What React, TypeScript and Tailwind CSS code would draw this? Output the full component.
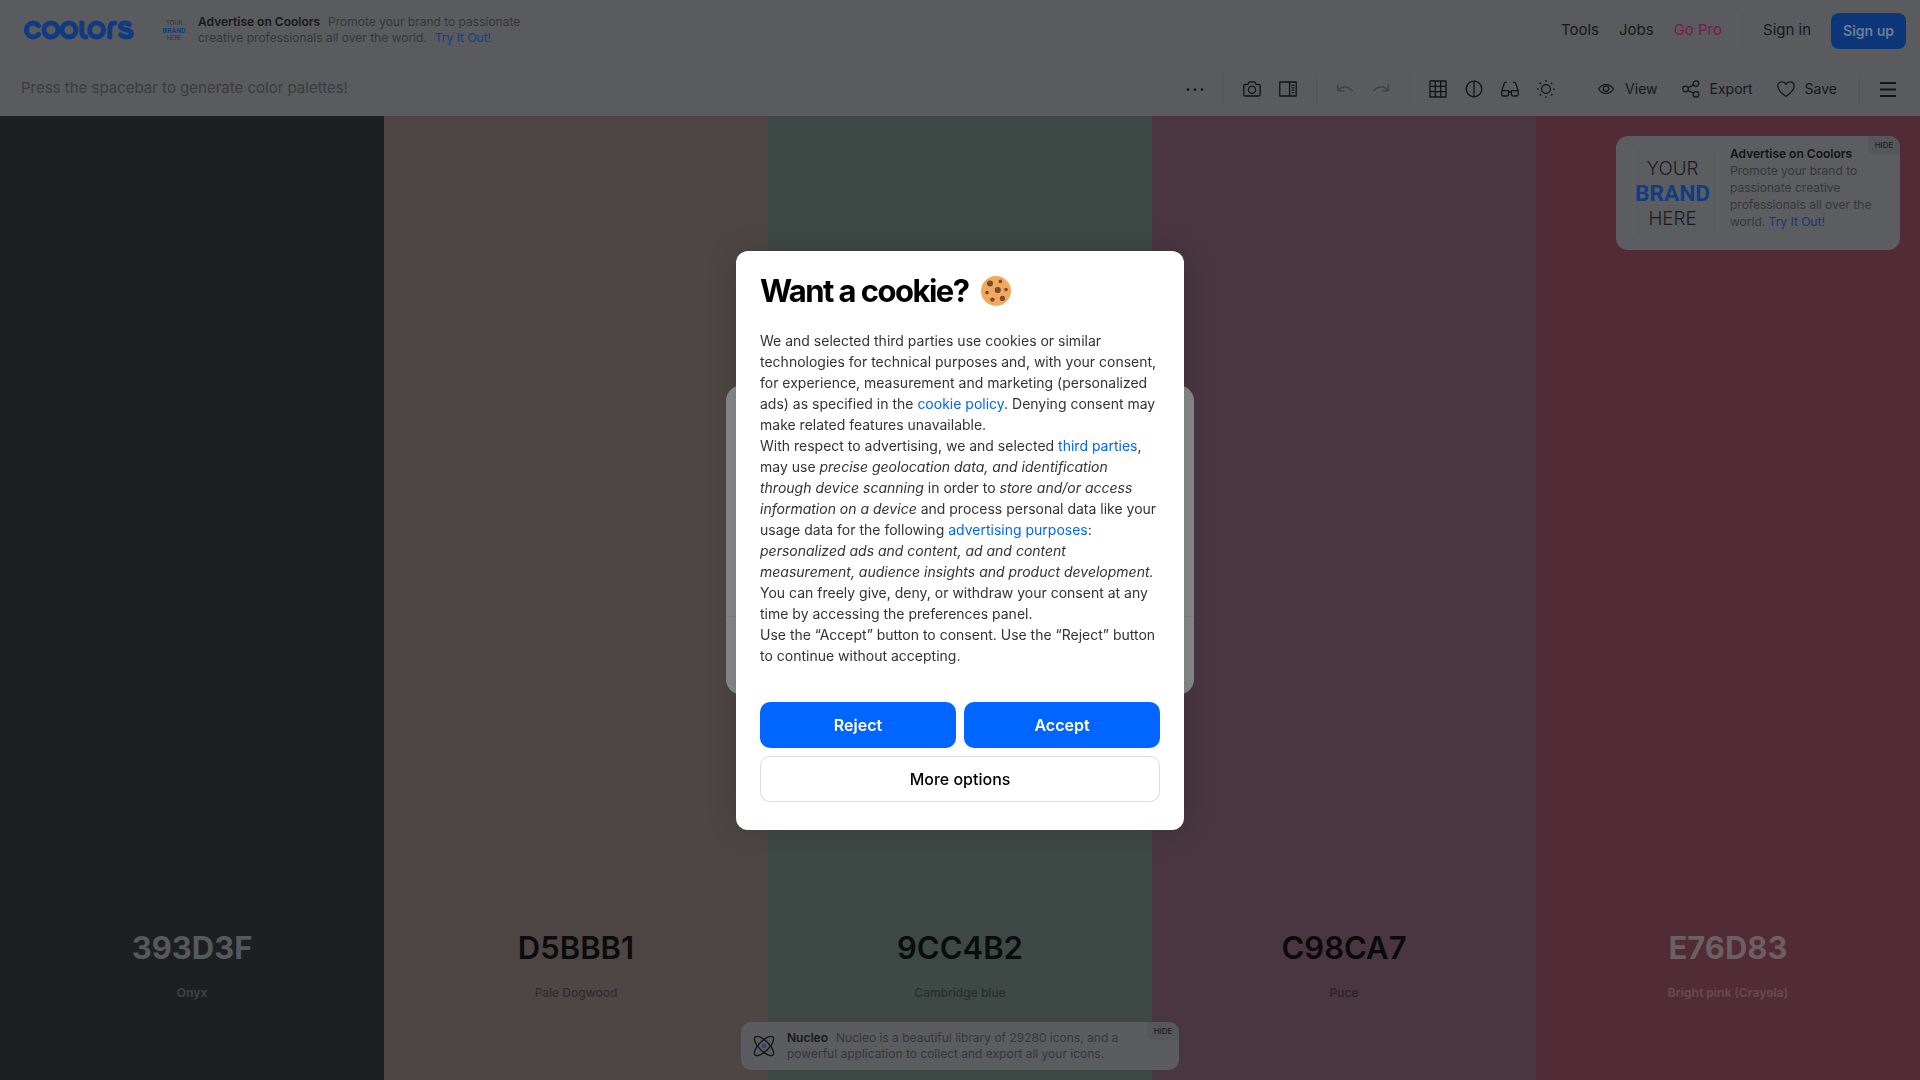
import type { ReactNode } from "react";

const palette = [
  { hex: "393D3F", name: "Onyx", column: "bg-[#1d2023]", code: "text-[#55595c] font-bold", label: "text-[#3c4043] font-bold" },
  { hex: "D5BBB1", name: "Pale Dogwood", column: "bg-[#4d4645]", code: "text-[#0c0c0c] font-semibold", label: "text-[#302c2c] font-medium" },
  { hex: "9CC4B2", name: "Cambridge blue", column: "bg-[#3e4845]", code: "text-[#090d0c] font-semibold", label: "text-[#272f2c] font-medium" },
  { hex: "C98CA7", name: "Puce", column: "bg-[#493641]", code: "text-[#0c090b] font-semibold", label: "text-[#2c2027] font-medium" },
  { hex: "E76D83", name: "Bright pink (Crayola)", column: "bg-[#512c36]", code: "text-[#6b5f62] font-bold", label: "text-[#66484f] font-bold" },
];

function Icon({ children, size = 18 }: { children: ReactNode; size?: number }) {
  return (
    <svg width={size} height={size} viewBox="0 0 18 18" fill="none" stroke="currentColor" strokeWidth="1.3" strokeLinecap="round" strokeLinejoin="round" aria-hidden="true">
      {children}
    </svg>
  );
}

function ToolButton({ label, muted, children }: { label: string; muted?: boolean; children: ReactNode }) {
  return (
    <button type="button" aria-label={label} className={`flex h-9 w-9 items-center justify-center ${muted ? "text-[#3f4043]" : "text-[#121316]"}`}>
      {children}
    </button>
  );
}

function TextButton({ label, children }: { label: string; children: ReactNode }) {
  return (
    <button type="button" className="flex h-9 items-center gap-2.5 px-3 text-sm leading-5 text-[#17181b]">
      {children}
      {label}
    </button>
  );
}

function Divider({ hidden }: { hidden?: boolean }) {
  return <span className={`mx-2.5 h-8 w-px ${hidden ? "" : "bg-[#545559]"}`} />;
}

function Logo() {
  return (
    <svg width="112" height="20" viewBox="0 0 112 20" fill="none" stroke="#103b80" strokeWidth="5" strokeLinecap="round" strokeLinejoin="round" role="img" aria-label="Coolors">
      <path d="M14.6 5.6A6.9 6.9 0 1 0 14.6 14.4" />
      <circle cx="27" cy="10" r="7" />
      <circle cx="45" cy="10" r="7" />
      <path d="M57.8 2.9V11.6C57.8 15 59.4 16.8 61.8 17" />
      <circle cx="72.6" cy="10" r="7" />
      <path d="M85.8 17V9.6C85.8 5.2 87.6 3.2 90.6 3.1" />
      <path d="M105.4 4.4C103 2.4 96.4 2.4 96.4 6.2C96.4 10.6 107.4 8.8 107.4 13.4C107.4 18 99.4 17.6 96.6 14.8" />
    </svg>
  );
}

function BrandArt({ width, height }: { width: number; height: number }) {
  return (
    <svg width={width} height={height} viewBox="0 0 84 92" role="img" aria-label="Your brand here" textAnchor="middle">
      <text x="39" y="29" fontSize="19" fill="#1b1c1f" fontFamily="Inter, sans-serif" fontWeight="300">YOUR</text>
      <text x="39" y="55" fontSize="23" fill="#103d84" fontFamily="Roboto, sans-serif" fontWeight="700">BRAND</text>
      <text x="39" y="79" fontSize="19" fill="#1b1c1f" fontFamily="Inter, sans-serif" fontWeight="300">HERE</text>
    </svg>
  );
}

function HideButton() {
  return (
    <button type="button" className="absolute top-0 right-0 h-[18px] w-8 rounded-tr-[10px] rounded-bl-md bg-[#55575a] text-[8px] leading-none font-medium text-[#1d1e21]">
      HIDE
    </button>
  );
}

function Header() {
  return (
    <header className="flex h-[60px] items-center justify-between pr-3.5 pl-6">
      <div className="flex items-center">
        <a href="#home" className="block"><Logo /></a>
        <a href="#ad" className="ml-[26px] flex items-center gap-2.5">
          <BrandArt width={26} height={28} />
          <p className="w-[344px] text-xs leading-4 text-[#36373a]">
            <strong className="mr-2 font-semibold text-[#17181b]">Advertise on Coolors</strong>
            Promote your brand to passionate creative professionals all over the world.
            <span className="ml-2 text-[#123f88]">Try It Out!</span>
          </p>
        </a>
      </div>
      <nav className="flex items-center gap-5 text-[15px] leading-5 text-[#17181b]">
        <a href="#tools">Tools</a>
        <a href="#jobs">Jobs</a>
        <a href="#pro" className="text-[#731c49]">Go Pro</a>
        <span className="h-9 w-px bg-[#56575b]" />
        <a href="#signin">Sign in</a>
        <button type="button" className="mt-0.5 h-9 rounded-lg bg-[#0d3679] px-3 text-sm font-semibold text-[#6d7c97]">Sign up</button>
      </nav>
    </header>
  );
}

function Toolbar() {
  return (
    <div className="flex h-14 items-center justify-between pr-3.5 pl-[21px]">
      <p className="text-[15px] leading-6 text-[#3a3b3e]">Press the spacebar to generate color palettes!</p>
      <div className="mt-0.5 flex items-center">
        <ToolButton label="More tools">
          <Icon><g fill="currentColor" stroke="none"><circle cx="2" cy="9.5" r="1.3" /><circle cx="9" cy="9.5" r="1.3" /><circle cx="16" cy="9.5" r="1.3" /></g></Icon>
        </ToolButton>
        <Divider />
        <ToolButton label="Create palette from photo">
          <Icon><path d="M2.2 4.5H4.8L6.3 1.8H11.7L13.2 4.5H15.8Q17.2 4.5 17.2 5.9V14.6Q17.2 16 15.8 16H2.2Q.8 16 .8 14.6V5.9Q.8 4.5 2.2 4.5Z" /><circle cx="9" cy="9.8" r="3.6" /></Icon>
        </ToolButton>
        <ToolButton label="Create a collage">
          <Icon><path d="M.8 2H17.2V16H.8ZM10.6 2V16M13.2 5.4H14.8M13.2 7.8H14.8M13.2 10.2H14.8M13.2 12.6H14.8" /></Icon>
        </ToolButton>
        <Divider />
        <ToolButton label="Undo" muted>
          <Icon><path d="M1.8 4.6V10.8H7.8M2.2 10.4C5.6 6.2 11.2 5.2 16.4 10.6" /></Icon>
        </ToolButton>
        <ToolButton label="Redo" muted>
          <Icon><path d="M16.2 4.6V10.8H10.2M15.8 10.4C12.4 6.2 6.8 5.2 1.6 10.6" /></Icon>
        </ToolButton>
        <Divider />
        <ToolButton label="View shades">
          <Icon><path d="M1 1H17V17H1ZM1 6.3H17M1 11.7H17M6.3 1V17M11.7 1V17" /></Icon>
        </ToolButton>
        <ToolButton label="Check contrast">
          <Icon><circle cx="9" cy="9" r="7.8" /><path d="M9 1.2V16.8" /></Icon>
        </ToolButton>
        <ToolButton label="Color blindness">
          <Icon><path d="M.8 10.6H7.6V14.2Q7.6 16 5.8 16H2.6Q.8 16 .8 14.2ZM10.4 10.6H17.2V14.2Q17.2 16 15.4 16H12.2Q10.4 16 10.4 14.2ZM7.6 12H10.4M.8 10.6L3.2 3.6Q3.7 2.2 5.4 2.2M17.2 10.6L14.8 3.6Q14.3 2.2 12.6 2.2" /></Icon>
        </ToolButton>
        <ToolButton label="Adjust palette">
          <Icon><circle cx="9" cy="9" r="4.4" /><path strokeWidth="1.7" d="M9 .9V1M9 17V17.1M.9 9H1M17 9H17.1M3.3 3.3V3.4M14.7 3.3V3.4M3.3 14.7V14.8M14.7 14.7V14.8" /></Icon>
        </ToolButton>
        <Divider hidden />
        <TextButton label="View">
          <Icon><path d="M1.6 9C5 3.2 13 3.2 16.4 9C13 14.8 5 14.8 1.6 9Z" /><circle cx="9" cy="8.6" r="2.7" /></Icon>
        </TextButton>
        <TextButton label="Export">
          <Icon><circle cx="3.6" cy="9" r="2.8" /><circle cx="14" cy="3.6" r="2.8" /><circle cx="14" cy="14.4" r="2.8" /><path d="M6.1 7.7L11.5 4.9M6.1 10.3L11.5 13.1" /></Icon>
        </TextButton>
        <TextButton label="Save">
          <Icon><path d="M9 16.6C5.4 13.8 .8 10.2 .8 6.2C.8 1.4 7 .2 9 4.4C11 .2 17.2 1.4 17.2 6.2C17.2 10.2 12.6 13.8 9 16.6Z" /></Icon>
        </TextButton>
        <Divider />
        <ToolButton label="Menu">
          <Icon><path strokeWidth="2" strokeLinecap="butt" d="M1 3H17M1 9.5H17M1 16H17" /></Icon>
        </ToolButton>
      </div>
    </div>
  );
}

function SideAd() {
  return (
    <aside className="absolute top-5 right-5 flex w-[284px] gap-3 rounded-xl bg-[#5b5d60] pt-[9px] pr-4 pb-[11px] pl-[17px]">
      <div className="h-[94px] w-[85px] shrink-0 border border-[#5f6164]"><BrandArt width={83} height={92} /></div>
      <p className="text-xs leading-[17px] text-[#36373a]">
        <strong className="block font-semibold text-[#121316]">Advertise on Coolors</strong>
        Promote your brand to passionate creative professionals all over the world.{" "}
        <a href="#try" className="text-[#1a3678]">Try It Out!</a>
      </p>
      <HideButton />
    </aside>
  );
}

function BottomAd() {
  return (
    <aside className="absolute bottom-2.5 left-1/2 flex h-12 w-[438px] -translate-x-1/2 items-center gap-3 rounded-[10px] bg-[#5a5c60] pl-3">
      <svg width="22" height="22" viewBox="0 0 22 22" fill="none" stroke="#17181b" strokeWidth="1.4" className="shrink-0" aria-hidden="true">
        <ellipse cx="11" cy="11" rx="12.6" ry="5" transform="rotate(45 11 11)" />
        <ellipse cx="11" cy="11" rx="12.6" ry="5" transform="rotate(-45 11 11)" />
        <circle cx="11" cy="11" r="2.2" fill="#3a3a78" stroke="none" />
      </svg>
      <p className="w-[350px] text-xs leading-4 text-[#36373a]">
        <strong className="mr-2 font-semibold text-[#17181b]">Nucleo</strong>
        Nucleo is a beautiful library of 29280 icons, and a powerful application to collect and export all your icons.
      </p>
      <HideButton />
    </aside>
  );
}

function CookieDialog() {
  const link = "text-[#0066ff]";
  return (
    <section role="dialog" aria-modal="true" aria-labelledby="cookie-title" className="relative w-[448px] rounded-xl bg-white px-6 pt-5 pb-7 shadow-[0_0_30px_rgba(0,0,0,0.18)]">
      <h1 id="cookie-title" className="flex items-center gap-3 text-[31px] leading-10 font-bold tracking-tighter text-black">
        Want a cookie?
        <svg width="32" height="32" viewBox="0 0 32 32" aria-hidden="true">
          <circle cx="16" cy="16" r="15" fill="#f0aa5f" />
          <g fill="#7d4a2c">
            <circle cx="10" cy="8.6" r="3" /><circle cx="20.4" cy="6.4" r="1.8" /><circle cx="17.8" cy="15" r="3.1" /><circle cx="26" cy="14.6" r="1.8" /><circle cx="7" cy="17.6" r="1.8" /><circle cx="12.4" cy="24.6" r="2.2" /><circle cx="22.4" cy="23.4" r="2.6" />
          </g>
        </svg>
      </h1>
      <div className="mt-[19px] text-sm leading-[21px] text-[#333333]">
        <p>
          We and selected third parties use cookies or similar technologies for technical purposes and, with your consent, for experience, measurement and marketing (personalized ads) as specified in the <a href="#policy" className={link}>cookie policy</a>. Denying consent may make related features unavailable.
        </p>
        <p>
          With respect to advertising, we and selected <a href="#parties" className={link}>third parties</a>, may use <em>precise geolocation data, and identification through device scanning</em> in order to <em>store and/or access information on a device</em> and process personal data like your usage data for the following <a href="#purposes" className={link}>advertising purposes</a>: <em>personalized ads and content, ad and content measurement, audience insights and product development.</em>
        </p>
        <p>You can freely give, deny, or withdraw your consent at any time by accessing the preferences panel.</p>
        <p>Use the “Accept” button to consent. Use the “Reject” button to continue without accepting.</p>
      </div>
      <div className="mt-9 grid grid-cols-2 gap-2 text-base">
        <button type="button" className="h-[46px] rounded-[10px] bg-[#0066ff] font-semibold text-white">Reject</button>
        <button type="button" className="h-[46px] rounded-[10px] bg-[#0066ff] font-semibold text-white">Accept</button>
        <button type="button" className="col-span-2 h-[46px] rounded-[10px] border border-[#dcdcdd] font-medium text-black">More options</button>
      </div>
    </section>
  );
}

export default function App() {
  return (
    <div className="flex min-h-screen flex-col bg-[#5a5b5f] font-['Inter',sans-serif]">
      <Header />
      <Toolbar />
      <main className="relative grid flex-1 grid-cols-5">
        {palette.map((c) => (
          <section key={c.hex} className={`flex flex-col items-center justify-end pb-[79px] ${c.column}`}>
            <h2 className={`text-[31px] leading-10 ${c.code}`}>{c.hex}</h2>
            <p className={`mt-[17px] text-xs leading-4 ${c.label}`}>{c.name}</p>
          </section>
        ))}
        <SideAd />
        <BottomAd />
      </main>
      <div className="fixed inset-0 grid place-items-center">
        <div className="col-start-1 row-start-1 flex h-[310px] w-[468px] flex-col justify-end rounded-2xl bg-[#898b8c]">
          <div className="h-[79px] border-t border-[#828487]" />
        </div>
        <div className="col-start-1 row-start-1"><CookieDialog /></div>
      </div>
    </div>
  );
}
